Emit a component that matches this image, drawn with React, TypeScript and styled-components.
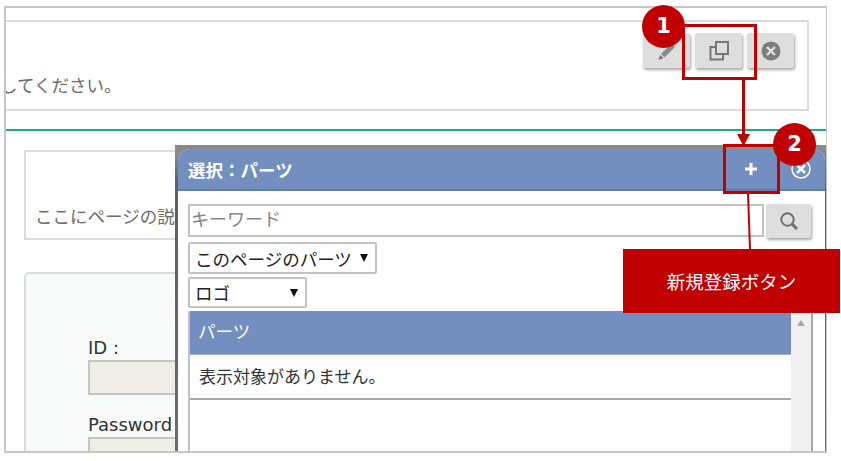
import React from "react";
import styled, { createGlobalStyle } from "styled-components";

const Global = createGlobalStyle`
  html, body { margin: 0; padding: 0; background: #fff; }
  body { width: 841px; height: 461px; overflow: hidden; font-family: "Noto Sans CJK JP", sans-serif; }
  * { box-sizing: border-box; }
`;

const Stage = styled.div`
  position: relative;
  width: 841px;
  height: 461px;
  padding: 6px 0 0 4px;
`;

const Frame = styled.div`
  position: relative;
  width: 823px;
  height: 447px;
  border: 2px solid #c6c6c6;
  border-right-width: 1px;
  overflow: hidden;
  padding-top: 12px;
`;

const TopCard = styled.div`
  display: flex;
  justify-content: flex-end;
  position: relative;
  width: 803px;
  height: 91px;
  border: 2px solid #dadada;
  border-left: none;
  padding: 11px 13px 0 0;
`;

const CardNote = styled.div`
  position: absolute;
  left: -6px;
  top: 49px;
  font-size: 17.5px;
  line-height: 28px;
  color: #6c6c6c;
  white-space: nowrap;
`;

const Tools = styled.div`
  display: flex;
  gap: 5px;
`;

const ToolButton = styled.div`
  width: 47px;
  height: 35px;
  background: #dedede;
  border-radius: 2px;
  box-shadow: 1px 2px 3px rgba(0, 0, 0, 0.35);
  display: flex;
  align-items: center;
  justify-content: center;
`;

const GreenRule = styled.div`
  height: 2px;
  margin-top: 18px;
  background: #18ad83;
`;

const DescCard = styled.div`
  width: 500px;
  height: 90px;
  margin: 19px 0 0 18px;
  border: 2px solid #dcdcdc;
  padding: 50px 0 0 9px;
  font-size: 17.5px;
  line-height: 28px;
  color: #6c6c6c;
  white-space: nowrap;
`;

const LoginCard = styled.div`
  width: 500px;
  height: 200px;
  margin: 32px 0 0 18px;
  border: 2px solid #dcdcdc;
  border-radius: 5px;
  background: #f8fafa;
  padding: 61px 0 0 62px;
`;

const FieldLabel = styled.div`
  font-family: "DejaVu Sans", sans-serif;
  font-size: 18px;
  line-height: 25px;
  color: #333;
`;

const FieldInput = styled.div`
  width: 200px;
  height: 35px;
  background: #eeede6;
  border: 2px solid #c4c4c0;
  margin-bottom: 17px;
`;

const Shade = styled.div`
  position: absolute;
  left: 169px;
  top: 137px;
  right: 0;
  bottom: 0;
  padding: 4px 1px 0 3px;
  background: linear-gradient(#8a8a8a 0 8px, #5f5f5f 40px, #6c6c6c);
`;

const Modal = styled.div`
  height: 100%;
  background: #fff;
  border-radius: 12px 12px 0 0;
  overflow: hidden;
`;

const ModalHeader = styled.div`
  height: 42px;
  background: #728fbf;
  border-bottom: 2px solid #5f7db0;
  display: flex;
  align-items: center;
  padding: 0 14px 0 10px;
  color: #fff;
  font-size: 17.5px;
  font-weight: 700;
`;

const ModalTitle = styled.div`
  flex: 1;
`;

const AddGlyph = styled.div`
  width: 16px;
  height: 16px;
  margin-right: 32px;
  display: flex;
`;

const ModalBody = styled.div`
  padding: 13px 0 0 10px;
`;

const SearchRow = styled.div`
  display: flex;
  gap: 2px;
  height: 34px;
`;

const SearchInput = styled.div`
  width: 576px;
  height: 33px;
  border: 2px solid #c2c2c2;
  padding-left: 1px;
  font-size: 18px;
  line-height: 25px;
  color: #858585;
`;

const SearchButton = styled.div`
  width: 45px;
  height: 34px;
  background: #dedede;
  border-radius: 2px;
  box-shadow: 1px 2px 3px rgba(0, 0, 0, 0.35);
  display: flex;
  align-items: center;
  justify-content: center;
`;

const SelectBox = styled.div<{ $w: number; $h: number; $mt: number }>`
  display: flex;
  align-items: center;
  justify-content: space-between;
  width: ${(p) => p.$w}px;
  height: ${(p) => p.$h}px;
  margin-top: ${(p) => p.$mt}px;
  border: 2px solid #c2c2c2;
  border-radius: 2px;
  padding: 0 7px 0 5px;
  font-size: 17.5px;
  color: #222;
`;

const Caret = styled.span`
  width: 0;
  height: 0;
  border-left: 4px solid transparent;
  border-right: 4px solid transparent;
  border-top: 8px solid #111;
`;

const TableWrap = styled.div`
  display: flex;
  width: 625px;
  height: 140px;
  margin-top: 3px;
  border-left: 2px solid #c2c2c2;
  border-right: 2px solid #a8a8a8;
`;

const TableMain = styled.div`
  flex: 1;
`;

const TableHead = styled.div`
  height: 44px;
  background: #728fbf;
  border-bottom: 1px solid #a8b0bd;
  padding-left: 8px;
  color: #fff;
  font-size: 17.5px;
  line-height: 40px;
`;

const TableRow = styled.div`
  height: 45px;
  border-bottom: 2px solid #a8a8a8;
  padding-left: 9px;
  color: #333;
  font-size: 17px;
  line-height: 41px;
`;

const Scrollbar = styled.div`
  width: 20px;
  background: #f1f1f1;
  display: flex;
  justify-content: center;
  padding-top: 9px;
`;

const ScrollArrow = styled.span`
  width: 0;
  height: 0;
  border-left: 4.5px solid transparent;
  border-right: 4.5px solid transparent;
  border-bottom: 6px solid #a8a8a8;
`;

const Badge = styled.div<{ $x: number; $y: number }>`
  position: absolute;
  left: ${(p) => p.$x}px;
  top: ${(p) => p.$y}px;
  width: 43px;
  height: 43px;
  border-radius: 50%;
  background: #c00000;
  color: #fff;
  font-family: "DejaVu Sans", sans-serif;
  font-weight: 700;
  font-size: 21px;
  line-height: 43px;
  text-align: center;
`;

const Highlight = styled.div<{ $x: number; $y: number; $w: number; $h: number }>`
  position: absolute;
  left: ${(p) => p.$x}px;
  top: ${(p) => p.$y}px;
  width: ${(p) => p.$w}px;
  height: ${(p) => p.$h}px;
  border: 3px solid #c00000;
`;

const Callout = styled.div`
  position: absolute;
  left: 623px;
  top: 249px;
  width: 217px;
  height: 64px;
  background: #c00000;
  color: #fff;
  font-size: 18.5px;
  display: flex;
  align-items: center;
  justify-content: center;
`;

const Leaders = styled.svg`
  position: absolute;
  left: 0;
  top: 0;
  pointer-events: none;
`;

const PencilIcon = () => (
  <svg width="20" height="20" viewBox="0 0 20 20">
    <path d="M14.5 2.5 18 6 7.5 16.5 4 13Z" fill="#8a8a8a" />
    <path d="M3.2 14 6.4 17.2 1.5 18.8Z" fill="#6f6f6f" />
  </svg>
);

const CopyIcon = () => (
  <svg width="22" height="22" viewBox="0 0 22 22" fill="none" stroke="#777" strokeWidth="2">
    <rect x="8" y="2" width="12" height="12" />
    <path d="M8 7H2.5V19.5H15V14" />
  </svg>
);

const CrossIcon = () => (
  <svg width="20" height="20" viewBox="0 0 20 20">
    <circle cx="10" cy="10" r="9.5" fill="#7d7d7d" />
    <path d="M6 6 14 14M14 6 6 14" stroke="#e4e4e4" strokeWidth="2.4" />
  </svg>
);

const CloseIcon = () => (
  <svg width="20" height="20" viewBox="0 0 20 20" fill="none" stroke="#fff">
    <circle cx="10" cy="10" r="9" strokeWidth="1.5" />
    <path d="M6 6 14 14M14 6 6 14" strokeWidth="2.6" />
  </svg>
);

const SearchIcon = () => (
  <svg width="20" height="20" viewBox="0 0 20 20" fill="none" stroke="#707070">
    <circle cx="8.5" cy="8.5" r="6.2" strokeWidth="2" />
    <path d="M13 13 18 18" strokeWidth="3" />
  </svg>
);

const PlusIcon = () => (
  <svg width="16" height="16" viewBox="0 0 16 16">
    <path d="M8 2V14M2 8H14" stroke="#fff" strokeWidth="3" />
  </svg>
);

export default function App() {
  return (
    <Stage>
      <Global />
      <Frame>
        <TopCard>
          <CardNote>してください。</CardNote>
          <Tools>
            <ToolButton><PencilIcon /></ToolButton>
            <ToolButton><CopyIcon /></ToolButton>
            <ToolButton><CrossIcon /></ToolButton>
          </Tools>
        </TopCard>
        <GreenRule />
        <DescCard>ここにページの説</DescCard>
        <LoginCard>
          <FieldLabel>ID :</FieldLabel>
          <FieldInput />
          <FieldLabel>Password</FieldLabel>
          <FieldInput />
        </LoginCard>
        <Shade>
          <Modal>
            <ModalHeader>
              <ModalTitle>選択：パーツ</ModalTitle>
              <AddGlyph><PlusIcon /></AddGlyph>
              <CloseIcon />
            </ModalHeader>
            <ModalBody>
              <SearchRow>
                <SearchInput>キーワード</SearchInput>
                <SearchButton><SearchIcon /></SearchButton>
              </SearchRow>
              <SelectBox $w={189} $h={32} $mt={4}>このページのパーツ<Caret /></SelectBox>
              <SelectBox $w={119} $h={31} $mt={3}>ロゴ<Caret /></SelectBox>
              <TableWrap>
                <TableMain>
                  <TableHead>パーツ</TableHead>
                  <TableRow>表示対象がありません。</TableRow>
                </TableMain>
                <Scrollbar><ScrollArrow /></Scrollbar>
              </TableWrap>
            </ModalBody>
          </Modal>
        </Shade>
      </Frame>
      <Highlight $x={682} $y={24} $w={75} $h={56} />
      <Highlight $x={723} $y={144} $w={57} $h={50} />
      <Leaders width="841" height="461">
        <path d="M743.5 79V136" stroke="#c00000" strokeWidth="3" />
        <path d="M737 134H750L743.5 146Z" fill="#c00000" />
        <path d="M748 193L750 250" stroke="#c00000" strokeWidth="2" />
      </Leaders>
      <Badge $x={642} $y={5}>1</Badge>
      <Badge $x={773} $y={123}>2</Badge>
      <Callout>新規登録ボタン</Callout>
    </Stage>
  );
}
